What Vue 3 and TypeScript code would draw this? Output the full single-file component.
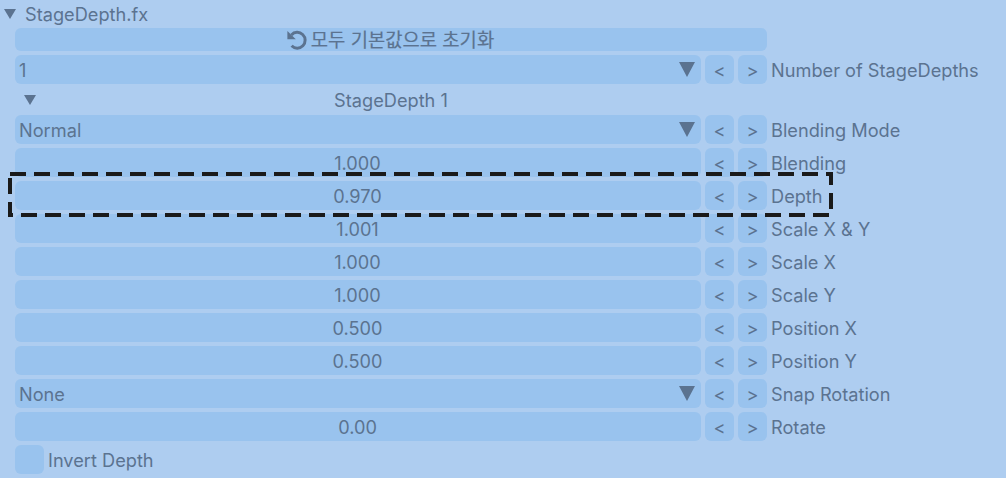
<script setup lang="ts">
type Row = { label: string; value: string; combo?: boolean }
const rows: Row[] = [
  { label: 'Blending Mode', value: 'Normal', combo: true },
  { label: 'Blending', value: '1.000' },
  { label: 'Depth', value: '0.970' },
  { label: 'Scale X & Y', value: '1.001' },
  { label: 'Scale X', value: '1.000' },
  { label: 'Scale Y', value: '1.000' },
  { label: 'Position X', value: '0.500' },
  { label: 'Position Y', value: '0.500' },
  { label: 'Snap Rotation', value: 'None', combo: true },
  { label: 'Rotate', value: '0.00' },
]
</script>

<template>
  <div class="panel">
    <div class="header">
      <span class="tri big"></span>
      <span>StageDepth.fx</span>
    </div>
    <button class="reset">
      <svg class="reset-icon" width="20" height="20" viewBox="0 0 20 20">
        <path d="M4.4 4.9 A7.9 7.9 0 1 1 4.6 15.8" fill="none" stroke="currentColor" stroke-width="3" />
        <path d="M0.4 1 L0.4 9.2 L8.8 9.2 Z" fill="currentColor" />
      </svg>
      <span class="korean">모두 기본값으로 초기화</span>
    </button>
    <div class="row">
      <div class="field combo">
        <span class="t">1</span>
        <span class="tri drop"></span>
      </div>
      <button class="step"><span class="t">&lt;</span></button>
      <button class="step"><span class="t">&gt;</span></button>
      <span class="label t">Number of StageDepths</span>
    </div>
    <div class="group">
      <span class="tri small"></span>
      <span class="t">StageDepth 1</span>
    </div>
    <div class="rows">
      <div v-for="r in rows" :key="r.label" class="row">
        <div class="field" :class="{ combo: r.combo }">
          <span class="t value">{{ r.value }}</span>
          <span v-if="r.combo" class="tri drop"></span>
        </div>
        <button class="step"><span class="t">&lt;</span></button>
        <button class="step"><span class="t">&gt;</span></button>
        <span class="label t">{{ r.label }}</span>
      </div>
    </div>
    <div class="check-row">
      <span class="check"></span>
      <span class="t">Invert Depth</span>
    </div>
    <svg class="highlight" width="1006" height="478" viewBox="0 0 1006 478">
      <path d="M10 174 H831 V215 H10 V174" fill="none" stroke="#1a1a1a" stroke-width="4" stroke-dasharray="16 8" />
    </svg>
  </div>
</template>

<style>
html, body { margin: 0; background: #aecdf0; }
</style>

<style scoped>
.panel {
  position: relative;
  width: 1006px;
  height: 478px;
  overflow: hidden;
  background: #aecdf0;
  color: #5b7390;
  font-family: Inter, "Noto Sans CJK KR", sans-serif;
  font-size: 18.2px;
  line-height: 22px;
  padding-left: 15px;
  box-sizing: border-box;
}
.t {
  display: block;
  padding-top: 1px;
}
.value { padding-right: 1px; }
.header {
  height: 28px;
  display: flex;
  align-items: center;
  margin-left: -11px;
  gap: 9px;
}
.tri {
  display: block;
  width: 0;
  height: 0;
  border-style: solid;
  border-color: #5b7390 transparent transparent transparent;
}
.big { border-width: 10px 6px 0 6px; margin-top: -1px; }
.small { border-width: 10px 6px 0 6px; }
.drop { border-width: 15px 8.5px 0 8.5px; }
.reset {
  width: 752px;
  height: 23px;
  display: flex;
  align-items: center;
  justify-content: center;
  gap: 4px;
  padding: 0 1px 0 0;
  border: 0;
  border-radius: 6px;
  background: #99c3ee;
  color: inherit;
  font: inherit;
}
.korean {
  display: block;
  padding-top: 2px;
  font-size: 18.8px;
  -webkit-text-stroke: 0.2px currentColor;
}
.reset-icon { flex: none; margin-top: 1px; }
.row {
  height: 29px;
  display: flex;
  align-items: center;
}
.reset + .row { margin-top: 4px; }
.rows {
  display: flex;
  flex-direction: column;
  gap: 4px;
}
.field {
  width: 686px;
  height: 29px;
  flex: none;
  display: flex;
  align-items: center;
  justify-content: center;
  border-radius: 6px;
  background: #99c3ee;
}
.combo {
  justify-content: space-between;
  padding: 0 6px 0 4px;
  box-sizing: border-box;
}
.step {
  width: 29px;
  height: 29px;
  flex: none;
  margin-left: 4px;
  padding: 0;
  border: 0;
  border-radius: 6px;
  background: #99c3ee;
  color: inherit;
  font: inherit;
}
.step + .step { margin-left: 4px; }
.label { margin-left: 4px; white-space: nowrap; }
.group {
  height: 31px;
  width: 752px;
  position: relative;
  display: flex;
  align-items: center;
  justify-content: center;
}
.group .small { position: absolute; left: 9px; top: 11px; }
.check-row {
  height: 29px;
  margin-top: 4px;
  display: flex;
  align-items: center;
  gap: 4px;
}
.check {
  width: 29px;
  height: 29px;
  border-radius: 6px;
  background: #99c3ee;
}
.highlight {
  position: absolute;
  left: 0;
  top: 0;
  pointer-events: none;
}
</style>
